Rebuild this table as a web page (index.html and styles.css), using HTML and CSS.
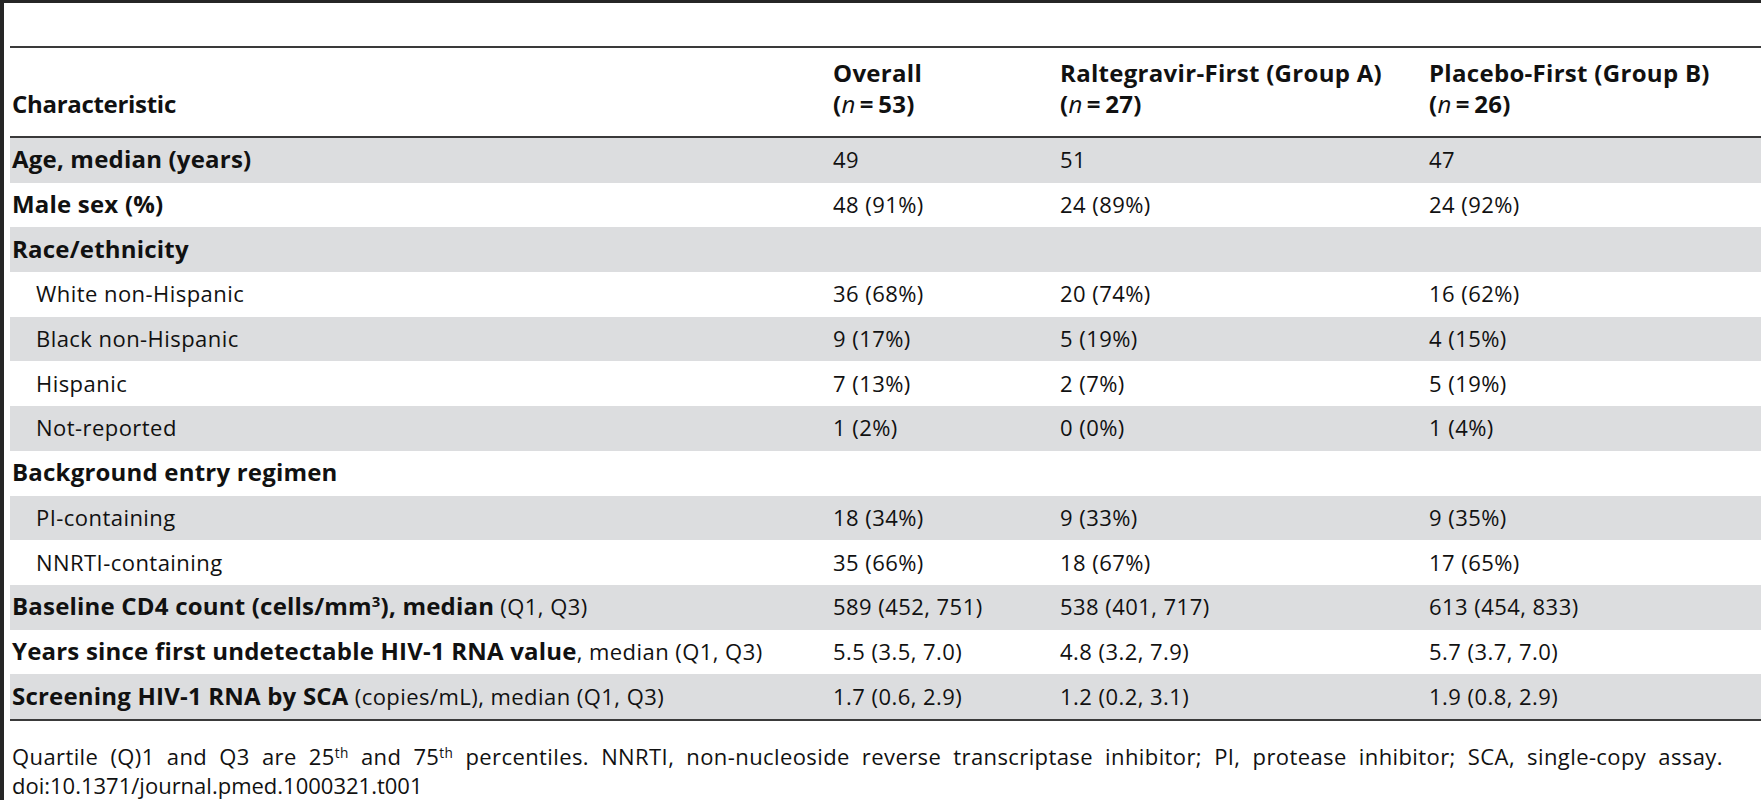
FILE: index.html
```html
<!DOCTYPE html>
<html lang="en">
<head>
  <meta charset="UTF-8" />
  <title>Table 1. Baseline characteristics</title>
  <link rel="stylesheet" href="styles.css">
</head>
<body>
  <div class="page">
    <table class="data-table">
      <colgroup>
        <col class="col-label">
        <col class="col-overall">
        <col class="col-groupa">
        <col class="col-groupb">
      </colgroup>
      <thead>
        <tr>
          <th class="label-head">Characteristic</th>
          <th>Overall<br>(<i>n</i>&thinsp;=&thinsp;53)</th>
          <th>Raltegravir-First (Group A)<br>(<i>n</i>&thinsp;=&thinsp;27)</th>
          <th>Placebo-First (Group B)<br>(<i>n</i>&thinsp;=&thinsp;26)</th>
        </tr>
      </thead>
      <tbody>
        <tr class="shade">
          <td><b>Age, median (years)</b></td><td>49</td><td>51</td><td>47</td>
        </tr>
        <tr>
          <td><b>Male sex (%)</b></td><td>48 (91%)</td><td>24 (89%)</td><td>24 (92%)</td>
        </tr>
        <tr class="shade">
          <td><b>Race/ethnicity</b></td><td></td><td></td><td></td>
        </tr>
        <tr>
          <td class="sub">White non-Hispanic</td><td>36 (68%)</td><td>20 (74%)</td><td>16 (62%)</td>
        </tr>
        <tr class="shade">
          <td class="sub">Black non-Hispanic</td><td>9 (17%)</td><td>5 (19%)</td><td>4 (15%)</td>
        </tr>
        <tr>
          <td class="sub">Hispanic</td><td>7 (13%)</td><td>2 (7%)</td><td>5 (19%)</td>
        </tr>
        <tr class="shade">
          <td class="sub">Not-reported</td><td>1 (2%)</td><td>0 (0%)</td><td>1 (4%)</td>
        </tr>
        <tr>
          <td><b>Background entry regimen</b></td><td></td><td></td><td></td>
        </tr>
        <tr class="shade">
          <td class="sub">PI-containing</td><td>18 (34%)</td><td>9 (33%)</td><td>9 (35%)</td>
        </tr>
        <tr>
          <td class="sub">NNRTI-containing</td><td>35 (66%)</td><td>18 (67%)</td><td>17 (65%)</td>
        </tr>
        <tr class="shade">
          <td><b>Baseline CD4 count (cells/mm<sup>3</sup>), median</b> (Q1, Q3)</td><td>589 (452, 751)</td><td>538 (401, 717)</td><td>613 (454, 833)</td>
        </tr>
        <tr>
          <td><b>Years since first undetectable HIV-1 RNA value</b>, median (Q1, Q3)</td><td>5.5 (3.5, 7.0)</td><td>4.8 (3.2, 7.9)</td><td>5.7 (3.7, 7.0)</td>
        </tr>
        <tr class="shade">
          <td><b>Screening HIV-1 RNA by SCA</b> (copies/mL), median (Q1, Q3)</td><td>1.7 (0.6, 2.9)</td><td>1.2 (0.2, 3.1)</td><td>1.9 (0.8, 2.9)</td>
        </tr>
      </tbody>
    </table>

    <div class="footnote">
      <p class="wide">Quartile (Q)1 and Q3 are 25<sup>th</sup> and 75<sup>th</sup> percentiles. NNRTI, non-nucleoside reverse transcriptase inhibitor; PI, protease inhibitor; SCA, single-copy assay.</p>
      <p class="doi">doi:10.1371/journal.pmed.1000321.t001</p>
    </div>
  </div>
</body>
</html>
```

FILE: styles.css
```css
html, body {
  margin: 0;
  padding: 0;
  height: 100%;
  overflow: hidden;
  background: white;
  font-family: 'Open Sans', sans-serif;
  color: #111;
  letter-spacing: 0.3px;
}

body {
  border-top: 3px solid #262626;
  border-left: 4px solid #262626;
  box-sizing: border-box;
}

.page {
  padding-left: 6px;
  padding-top: 43px;
}

.data-table {
  width: 1751px;
  border-collapse: separate;
  border-spacing: 0;
  table-layout: fixed;
  border-top: 2px solid #3a3a3a;
  border-bottom: 2px solid #3a3a3a;
}

.col-label { width: 821px; }
.col-overall { width: 227px; }
.col-groupa { width: 369px; }
.col-groupb { width: 334px; }

.data-table thead th {
  text-align: left;
  vertical-align: bottom;
  font-size: 24px;
  font-weight: 700;
  line-height: 31px;
  padding: 0 0 17px 2px;
  height: 90px;
  box-sizing: border-box;
  border-bottom: 2px solid #3a3a3a;
}

.data-table thead th.label-head {
  letter-spacing: -0.3px;
}

.data-table th i {
  font-weight: 400;
}

.data-table td {
  height: 44.7px;
  box-sizing: border-box;
  padding: 0 0 2px 2px;
  font-size: 22px;
  line-height: 28px;
  vertical-align: middle;
  white-space: nowrap;
  letter-spacing: 0.45px;
}

.data-table td b {
  font-size: 24px;
  letter-spacing: 0.2px;
}

.data-table td.sub {
  padding-left: 26px;
}

.data-table tr.shade td {
  background: #dcdddf;
}

sup {
  font-size: 0.62em;
  line-height: 0;
  vertical-align: 0.55em;
}

.footnote {
  padding: 21px 0 0 2px;
  font-size: 22px;
  line-height: 29px;
  letter-spacing: 0.4px;
}

.footnote p {
  margin: 0;
}

.footnote .wide {
  word-spacing: 6px;
}

.footnote .doi {
  letter-spacing: 0;
}
```
